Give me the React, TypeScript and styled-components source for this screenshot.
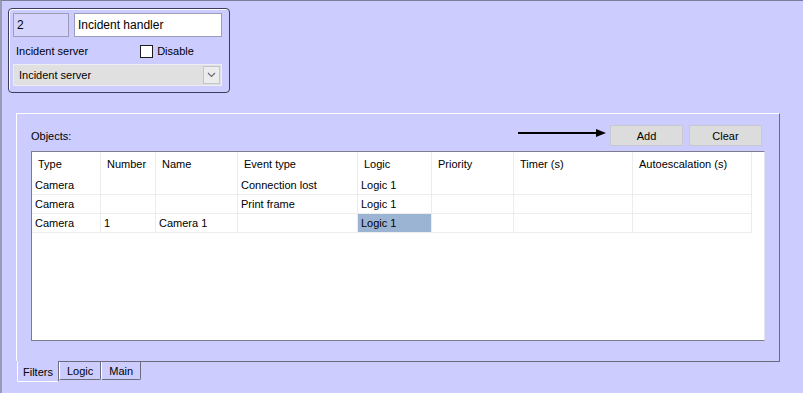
import styled, { createGlobalStyle } from 'styled-components';

const GlobalStyle = createGlobalStyle`
  html, body {
    margin: 0;
    padding: 0;
    background: #ccccfe;
  }
  body {
    font-family: 'Liberation Sans', Arial, sans-serif;
    font-size: 11px;
    color: #000;
  }
`;

const columns = [
  { title: 'Type', width: 69 },
  { title: 'Number', width: 55 },
  { title: 'Name', width: 82 },
  { title: 'Event type', width: 120 },
  { title: 'Logic', width: 74 },
  { title: 'Priority', width: 82 },
  { title: 'Timer (s)', width: 119 },
  { title: 'Autoescalation (s)', width: 119 },
];

const rows = [
  ['Camera', '', '', 'Connection lost', 'Logic 1', '', '', ''],
  ['Camera', '', '', 'Print frame', 'Logic 1', '', '', ''],
  ['Camera', '1', 'Camera 1', '', 'Logic 1', '', '', ''],
];

const gridTemplate = columns.map((c) => `${c.width}px`).join(' ');

const App = () => {
  return (
    <Window>
      <GlobalStyle />
      <HeaderPanel>
        <FieldRow>
          <IdField>2</IdField>
          <NameField>Incident handler</NameField>
        </FieldRow>
        <OptionRow>
          <Label>Incident server</Label>
          <CheckLabel>
            <CheckBox />
            Disable
          </CheckLabel>
        </OptionRow>
        <Select>
          <SelectText>Incident server</SelectText>
          <SelectButton>
            <svg width="9" height="6" viewBox="0 0 9 6">
              <path d="M1 1 L4.5 4.5 L8 1" fill="none" stroke="#6a6a7a" strokeWidth="1.2" />
            </svg>
          </SelectButton>
        </Select>
      </HeaderPanel>

      <TabArea>
        <GroupPanel>
          <Toolbar>
            <Label>Objects:</Label>
            <Actions>
              <Arrow width="88" height="8" viewBox="0 0 88 8">
                <line x1="0" y1="4" x2="80" y2="4" stroke="#000" strokeWidth="2" />
                <polygon points="78,0 88,4 78,8" fill="#000" />
              </Arrow>
              <Button>Add</Button>
              <Button>Clear</Button>
            </Actions>
          </Toolbar>
          <Table>
            <HeaderRow>
              {columns.map((c) => (
                <HeaderCell key={c.title}>{c.title}</HeaderCell>
              ))}
            </HeaderRow>
            {rows.map((r, i) => (
              <DataRow key={i}>
                {r.map((v, j) => (
                  <Cell key={j} $selected={i === 2 && j === 4}>
                    {v}
                  </Cell>
                ))}
              </DataRow>
            ))}
          </Table>
        </GroupPanel>
        <Tabs>
          <Tab $active>Filters</Tab>
          <Tab>Logic</Tab>
          <Tab>Main</Tab>
        </Tabs>
      </TabArea>
    </Window>
  );
};

const Window = styled.div`
  box-sizing: border-box;
  width: 803px;
  height: 393px;
  border-top: 1px solid #7c7c98;
  border-left: 2px solid #9a9ab4;
  padding: 7px 0 0 6px;
  background: #ccccfe;
  overflow: hidden;
`;

const HeaderPanel = styled.div`
  box-sizing: border-box;
  width: 222px;
  height: 85px;
  border: 1px solid #3c3c58;
  border-radius: 4px;
  padding: 4px 7px 0 4px;
  display: flex;
  flex-direction: column;
  box-shadow: 1px 1px 0 #ffffff inset;
`;

const FieldRow = styled.div`
  display: flex;
  gap: 5px;
  height: 24px;
`;

const IdField = styled.div`
  box-sizing: border-box;
  width: 56px;
  height: 24px;
  border: 1px solid #9c9cb8;
  background: #d4d4fc;
  padding: 4px 3px;
  font-size: 12px;
`;

const NameField = styled.div`
  box-sizing: border-box;
  flex: 1;
  height: 24px;
  border: 1px solid #9c9cb8;
  background: #ffffff;
  padding: 4px 3px;
  font-size: 12px;
`;

const OptionRow = styled.div`
  display: flex;
  align-items: center;
  height: 22px;
  margin-top: 3px;
  padding-left: 3px;
`;

const Label = styled.span`
  font-size: 11px;
`;

const CheckLabel = styled.label`
  display: flex;
  align-items: center;
  gap: 4px;
  margin-left: 52px;
  font-size: 11px;
`;

const CheckBox = styled.span`
  box-sizing: border-box;
  width: 13px;
  height: 13px;
  border: 1px solid #1c1c1c;
  background: #ffffff;
`;

const Select = styled.div`
  box-sizing: border-box;
  display: flex;
  align-items: center;
  width: 209px;
  height: 22px;
  margin-top: 2px;
  border: 1px solid #ececf4;
  background: #e0e0e0;
`;

const SelectText = styled.span`
  flex: 1;
  padding-left: 5px;
  font-size: 11px;
`;

const SelectButton = styled.span`
  box-sizing: border-box;
  display: flex;
  align-items: center;
  justify-content: center;
  width: 17px;
  height: 18px;
  margin-right: 1px;
  border: 1px solid #c4c4cc;
  background: #ececec;
`;

const TabArea = styled.div`
  margin: 20px 0 0 8px;
`;

const GroupPanel = styled.div`
  box-sizing: border-box;
  width: 764px;
  height: 249px;
  border-top: 1px solid #ffffff;
  border-left: 1px solid #ffffff;
  border-right: 1px solid #6c6c7c;
  border-bottom: 1px solid #6c6c7c;
  padding: 11px 0 0 14px;
`;

const Toolbar = styled.div`
  display: flex;
  align-items: center;
  justify-content: space-between;
  width: 731px;
  height: 21px;
  padding-bottom: 5px;
`;

const Actions = styled.div`
  display: flex;
  align-items: center;
  gap: 6px;
`;

const Arrow = styled.svg`
  margin-right: -2px;
  margin-top: -6px;
`;

const Button = styled.button`
  box-sizing: border-box;
  width: 73px;
  height: 21px;
  border: 1px solid #c8c8d0;
  background: #dcdcdc;
  font-family: 'Liberation Sans', Arial, sans-serif;
  font-size: 11px;
  color: #000;
  padding: 0;
`;

const Table = styled.div`
  box-sizing: border-box;
  width: 734px;
  height: 190px;
  border-top: 1px solid #7c7c8c;
  border-left: 1px solid #7c7c8c;
  border-right: 1px solid #e4e4ec;
  border-bottom: 1px solid #7c7c8c;
  background: #ffffff;
`;

const HeaderRow = styled.div`
  display: grid;
  grid-template-columns: ${gridTemplate};
  height: 24px;
`;

const HeaderCell = styled.div`
  display: flex;
  align-items: center;
  padding-left: 6px;
  border-right: 1px solid #ececec;
  font-size: 11px;
`;

const DataRow = styled.div`
  display: grid;
  grid-template-columns: ${gridTemplate};
  height: 19px;
`;

const Cell = styled.div<{ $selected?: boolean }>`
  display: flex;
  align-items: center;
  padding-left: 3px;
  border-right: 1px solid #ececec;
  border-bottom: 1px solid #ececec;
  background: ${({ $selected }) => ($selected ? '#9cb4d4' : 'transparent')};
  font-size: 11px;
`;

const Tabs = styled.div`
  display: flex;
  align-items: flex-start;
  margin-left: 1px;
`;

const Tab = styled.div<{ $active?: boolean }>`
  box-sizing: border-box;
  display: flex;
  align-items: center;
  height: ${({ $active }) => ($active ? '21px' : '18px')};
  margin-top: ${({ $active }) => ($active ? '-1px' : '0')};
  padding: ${({ $active }) => ($active ? '1px 5px 0 5px' : '0 7px')};
  border-left: 1px solid #ffffff;
  border-right: 1px solid #6c6c7c;
  border-bottom: 1px solid ${({ $active }) => ($active ? '#ffffff' : '#6c6c7c')};
  border-radius: 0 0 2px 2px;
  background: #ccccfe;
  font-size: 11px;
`;

export default App;
